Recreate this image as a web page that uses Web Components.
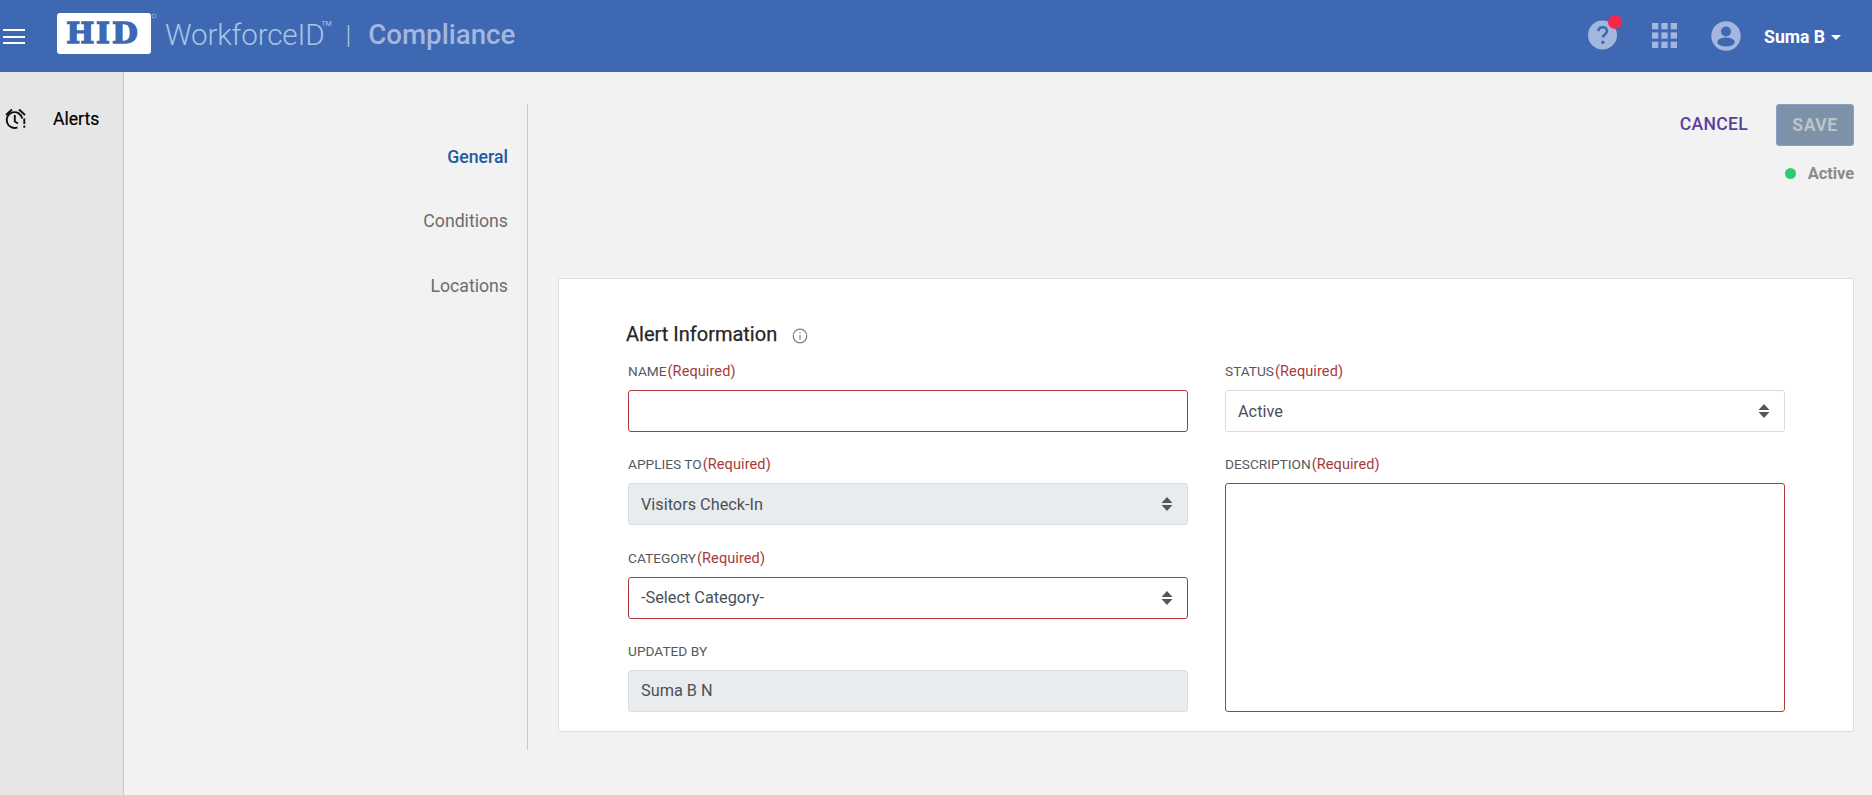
<!DOCTYPE html>
<html lang="en">
<head>
<meta charset="utf-8">
<title>Compliance</title>
<style>
html,body{margin:0;padding:0;height:100%;background:#f2f2f2;overflow:hidden}
body{font-family:Roboto,"Liberation Sans",sans-serif}
</style>
</head>
<body>
<app-shell>
  <app-header slot="header"></app-header>
  <app-sidebar slot="sidebar"></app-sidebar>
  <section-nav slot="nav">
    <nav-link active>General</nav-link>
    <nav-link>Conditions</nav-link>
    <nav-link>Locations</nav-link>
  </section-nav>
  <form-toolbar slot="toolbar"></form-toolbar>
  <info-card slot="card" heading="Alert Information">
    <form-field label="NAME" required invalid style="grid-column:1;grid-row:1"></form-field>
    <form-field label="STATUS" required kind="select" value="Active" style="grid-column:2;grid-row:1"></form-field>
    <form-field label="APPLIES TO" required disabled kind="select" value="Visitors Check-In" style="grid-column:1;grid-row:2"></form-field>
    <form-field label="DESCRIPTION" required invalid kind="area" style="grid-column:2;grid-row:2 / span 3"></form-field>
    <form-field label="CATEGORY" required invalid kind="select" value="-Select Category-" style="grid-column:1;grid-row:3"></form-field>
    <form-field label="UPDATED BY" disabled value="Suma B N" style="grid-column:1;grid-row:4"></form-field>
  </info-card>
</app-shell>
<script>
function def(name, html, init){
  customElements.define(name, class extends HTMLElement{
    constructor(){super();this.attachShadow({mode:'open'}).innerHTML=html;}
    connectedCallback(){ if(init) init.call(this,this.shadowRoot); }
  });
}
def('app-shell',`<style>
:host{display:flex;flex-direction:column;height:795px;width:1872px;overflow:hidden;background:#f2f2f2}
.body{flex:1;display:flex;min-height:0}
.main{flex:1;display:flex;align-items:flex-start;padding-top:32px;min-width:0}
.right{flex:1;min-width:0;padding:0 18px 0 30px}
</style>
<slot name="header"></slot>
<div class="body">
  <slot name="sidebar"></slot>
  <div class="main">
    <slot name="nav"></slot>
    <div class="right"><slot name="toolbar"></slot><slot name="card"></slot></div>
  </div>
</div>`);
def('app-header',`<style>
:host{display:flex;align-items:center;height:72px;background:#3f68b3;padding:0 31px 0 3px;box-sizing:border-box;flex:none}
.burger{width:22px;height:15px;display:flex;flex-direction:column;justify-content:space-between;margin-right:32px;margin-top:1px}
.burger i{display:block;height:2px;background:#fff}
.logo{display:block;width:102px;height:44px;margin-right:6px;margin-top:-2px}
.product{font-weight:300;font-size:29.700px;color:#a5c6e6;letter-spacing:-.2px;line-height:32px;position:relative;padding-right:7px;margin-top:-3px}
.product sup{position:absolute;right:0;top:1px;font-size:7px;line-height:8px;font-weight:400}
.sep{font-weight:300;font-size:26px;color:#a5c6e6;margin:-3px 17px 0 14px;line-height:32px}
.mod{font-weight:500;font-size:27.700px;color:#a3b6de;line-height:32px;margin-top:-3px}
.tools{margin-left:auto;display:flex;align-items:center}
svg{display:block}
.grid{margin-right:34px;margin-top:-1px}
.user{margin-right:23px}
.name{font-weight:700;font-size:17.600px;color:#fff;line-height:24px;margin-right:6px;margin-top:1px}
.caret{width:0;height:0;border-left:5px solid transparent;border-right:5px solid transparent;border-top:5px solid #fff;margin-top:3px}
</style>
<div class="burger"><i></i><i></i><i></i></div>
<svg class="logo" viewBox="0 0 102 44" role="img" aria-label="HID logo">
  <rect x="0" y="0" width="94" height="41" rx="3" fill="#fff"/>
  <text transform="scale(1.100 1)" x="8.500 35.500 50" y="30.500" font-family="'DejaVu Serif',serif" font-weight="700" font-size="27" fill="#3f68b3" stroke="#3f68b3" stroke-width="1.300">HID</text>
  <circle cx="97" cy="3" r="2" fill="none" stroke="#a5c6e6" stroke-width=".7"/>
</svg>
<span class="product">WorkforceID<sup>TM</sup></span>
<span class="sep">|</span>
<span class="mod">Compliance</span>
<div class="tools">
  <svg class="help" width="36" height="36" viewBox="0 0 36 36" style="margin-right:28px;margin-top:-8px">
    <circle cx="14.500" cy="21" r="14.500" fill="#a3b6de"/>
    <path d="M10.300 17.200c.2-2.500 2-4 4.400-4 2.500 0 4.300 1.500 4.300 3.700 0 1.900-1.100 2.800-2.300 3.700-1.100.8-1.800 1.500-1.800 3" fill="none" stroke="#3f68b3" stroke-width="2.600"/>
    <circle cx="14.800" cy="28.200" r="1.700" fill="#3f68b3"/>
    <circle cx="27" cy="8" r="7" fill="#f5264f"/>
  </svg>
  <svg class="grid" width="25" height="25" viewBox="0 0 25 25" fill="#a3b6de">
    <rect x="0" y="0" width="6.300" height="6.300"/><rect x="9.350" y="0" width="6.300" height="6.300"/><rect x="18.700" y="0" width="6.300" height="6.300"/>
    <rect x="0" y="9.350" width="6.300" height="6.300"/><rect x="9.350" y="9.350" width="6.300" height="6.300"/><rect x="18.700" y="9.350" width="6.300" height="6.300"/>
    <rect x="0" y="18.700" width="6.300" height="6.300"/><rect x="9.350" y="18.700" width="6.300" height="6.300"/><rect x="18.700" y="18.700" width="6.300" height="6.300"/>
  </svg>
  <svg class="user" width="30" height="30" viewBox="0 0 30 30">
    <circle cx="15" cy="15" r="14.700" fill="#a3b6de"/>
    <circle cx="15" cy="10.500" r="5" fill="#3f68b3"/>
    <ellipse cx="15" cy="21" rx="8.700" ry="4.600" fill="#3f68b3"/>
  </svg>
  <span class="name">Suma B</span><span class="caret"></span>
</div>`);
def('app-sidebar',`<style>
:host{display:block;width:124px;flex:none;box-sizing:border-box;background:#e6e6e6;border-right:1px solid #c6c6c6;padding-top:35px}
.item{display:flex;align-items:center;height:24px;padding-left:4px}
svg{display:block;margin-right:26px}
span{font-size:17.600px;line-height:24px;color:#000;font-weight:400;-webkit-text-stroke:.2px #000}
</style>
<div class="item">
<svg width="23" height="24" viewBox="0 0 23 24" fill="none" stroke="#111" stroke-width="1.900">
  <path d="M18.300 11.500A7.900 7.900 0 1 0 13.500 20.400"/>
  <path d="M10.800 8v6.500l3.200 2"/>
  <path d="M2 8L8 2.500M15 2.500l6 5.500"/>
  <path d="M20.300 11.500v5.500M20.300 18.500v2.200"/>
</svg>
<span>Alerts</span>
</div>`);
def('section-nav',`<style>
:host{display:flex;flex-direction:column;gap:40px;align-items:flex-end;box-sizing:border-box;width:404px;height:646px;flex:none;border-right:1px solid #c9c9c9;padding:41px 19px 0 0}
</style><slot></slot>`);
def('nav-link',`<style>
:host{display:block;font-size:17.700px;line-height:24px;color:#6d6d6d}
:host([active]){color:#1f5a9f;font-weight:500}
:host(:last-child){margin-top:1px}
</style><slot></slot>`);
def('form-toolbar',`<style>
:host{display:block;height:174px}
.row{display:flex;justify-content:flex-end;align-items:center;gap:28px}
.cancel{font-size:17.600px;font-weight:500;color:#5b3f9b;letter-spacing:.3px;margin-top:-2px}
.save{box-sizing:border-box;width:78px;height:42px;background:#7d92a9;border:1px solid #8aa0c6;border-radius:3px;color:#bcc3c9;font-weight:700;font-size:17.600px;letter-spacing:.5px;display:flex;align-items:center;justify-content:center}
.status{display:flex;justify-content:flex-end;align-items:center;margin-top:17px;height:20px;gap:12px}
.dot{width:11px;height:11px;border-radius:50%;background:#2ecc71;display:block}
.txt{font-size:16.500px;font-weight:700;color:#8b8b8b;letter-spacing:-.1px}
</style>
<div class="row"><span class="cancel">CANCEL</span><span class="save">SAVE</span></div>
<div class="status"><i class="dot"></i><span class="txt">Active</span></div>`);
def('info-card',`<style>
:host{display:block;box-sizing:border-box;background:#fff;border:1px solid #dedede;border-radius:2px;padding:43px 68px 19px 69px}
h2{margin:0 0 15px -2px;font-size:20px;line-height:24px;font-weight:400;-webkit-text-stroke:.25px #262626;color:#262626;display:flex;align-items:center;gap:15px}
svg{display:block;margin-top:3px}
.grid{display:grid;grid-template-columns:1fr 1fr;column-gap:37px;row-gap:22.330px;grid-template-rows:71px 71px 71px 71px}
</style>
<h2><span id="t"></span><svg width="16" height="16" viewBox="0 0 16 16" fill="none" stroke="#7b7b7b"><circle cx="8" cy="8" r="6.800" stroke-width="1.200"/><path d="M8 7.200v4.200" stroke-width="1.200"/><path d="M8 4.400v1.300" stroke-width="1.200"/></svg></h2>
<div class="grid"><slot></slot></div>`,function(r){r.getElementById('t').textContent=this.getAttribute('heading');});
def('form-field',`<style>
:host{display:flex;flex-direction:column;min-width:0}
.lab{font-size:13.700px;line-height:20px;color:#54595f;margin-bottom:8px;white-space:nowrap;flex:none}
.req{color:#a63a3a;font-size:14.500px;letter-spacing:.1px;margin-left:1px}
.ctl{box-sizing:border-box;height:42px;flex:none;display:flex;align-items:center;justify-content:space-between;border:1px solid #dcdcdc;border-radius:3px;background:#fff;padding:0 14px 0 12px;font-size:16.300px;color:#495057}
:host([invalid]) .ctl{border-color:#b43a3a}
:host([disabled]) .ctl{background:#e9ecef;border-color:#dcdfe2}
:host([kind="area"]) .ctl{flex:1;height:auto;align-items:flex-start}
svg{display:none}
:host([kind="select"]) svg{display:block}
</style>
<div class="lab"><span id="l"></span><span class="req" id="r"></span></div>
<div class="ctl"><span id="v"></span><svg width="12" height="14" viewBox="0 0 12 14" fill="#565656"><path d="M6 0l5.500 6H.5zM6 14L.5 8h11z"/></svg></div>`,function(r){
  r.getElementById('l').textContent=this.getAttribute('label');
  if(this.hasAttribute('required')) r.getElementById('r').textContent='(Required)';
  r.getElementById('v').textContent=this.getAttribute('value')||'';
});
</script>
</body>
</html>
